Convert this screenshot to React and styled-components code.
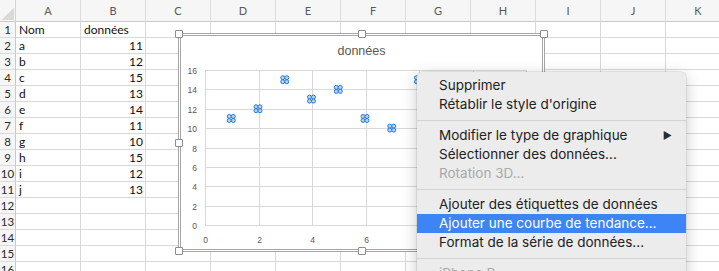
import React from "react";
import styled, { createGlobalStyle, css } from "styled-components";

const GlobalStyle = createGlobalStyle`
  html, body { margin: 0; padding: 0; background: #fff; overflow: hidden; }
  * { box-sizing: border-box; }
`;

const Sheet = styled.div`
  position: relative;
  width: 719px;
  height: 271px;
  overflow: hidden;
  background: #fff;
  font-family: Lato, "Liberation Sans", sans-serif;
`;

const Grid = styled.div`
  display: grid;
  grid-template-columns: 16px repeat(11, 65px);
  grid-template-rows: 22px repeat(16, 16px);
`;

const Corner = styled.div`
  position: relative;
  background: #f6f6f6;
  border-right: 1px solid #d4d4d4;
  border-bottom: 1px solid #c9c9c9;
  &::after {
    content: "";
    position: absolute;
    right: 1px;
    bottom: 1px;
    width: 12px;
    height: 12px;
    background: linear-gradient(135deg, transparent 50%, #dadada 50%);
  }
`;

const ColHeader = styled.div`
  background: #f6f6f6;
  border-right: 1px solid #dcdcdc;
  border-bottom: 1px solid #c9c9c9;
  color: #595959;
  font-size: 11px;
  display: flex;
  align-items: center;
  justify-content: center;
`;

const RowHeader = styled.div`
  background: #f6f6f6;
  border-right: 1px solid #c9c9c9;
  border-bottom: 1px solid #dcdcdc;
  color: #2b2b2b;
  font-size: 11.5px;
  line-height: 15px;
  white-space: nowrap;
  display: flex;
  justify-content: center;
`;

const Cell = styled.div`
  border-right: 1px solid #d9d9d9;
  border-bottom: 1px solid #d9d9d9;
  color: #111;
  font-size: 12px;
  line-height: 15px;
  padding: 0 2px 0 3px;
  white-space: nowrap;
  text-align: ${(p) => (p.$num ? "right" : "left")};
`;

const Chart = styled.div`
  position: absolute;
  left: 178px;
  top: 33px;
  width: 367px;
  height: 219px;
  border: 3px double #a6a6a6;
  background: #fff;
`;

const hPos = { start: "left: -6px;", mid: "left: calc(50% - 4px);", end: "right: -6px;" };
const vPos = { start: "top: -6px;", mid: "top: calc(50% - 4px);", end: "bottom: -6px;" };

const Handle = styled.div`
  position: absolute;
  width: 8px;
  height: 8px;
  background: #fff;
  border: 1px solid #8c8c8c;
  border-radius: 1px;
  ${(p) => hPos[p.$h]}
  ${(p) => vPos[p.$v]}
`;

const Menu = styled.div`
  position: absolute;
  left: 417px;
  top: 72px;
  width: 269px;
  padding: 4px 0;
  background: #ececec;
  border-radius: 5px;
  box-shadow: 0 0 0 0.5px rgba(0, 0, 0, 0.14), 0 4px 16px rgba(0, 0, 0, 0.22);
  font-family: Inter, "Liberation Sans", sans-serif;
  font-size: 13.5px;
  color: #222;
`;

const Item = styled.div`
  height: 19px;
  line-height: 19px;
  padding: 0 14px 0 22px;
  display: flex;
  justify-content: space-between;
  align-items: center;
  white-space: nowrap;
  ${(p) =>
    p.$disabled &&
    css`
      color: #a9a9a9;
    `}
  ${(p) =>
    p.$active &&
    css`
      background: #3d85f6;
      color: #fff;
    `}
`;

const Arrow = styled.span`
  font-size: 10px;
  color: #2b2b2b;
`;

const Separator = styled.div`
  height: 1px;
  margin: 6px 0 5px;
  background: #d3d3d3;
`;

const cols = ["A", "B", "C", "D", "E", "F", "G", "H", "I", "J", "K"];
const data = [
  ["Nom", "données"],
  ["a", 11],
  ["b", 12],
  ["c", 15],
  ["d", 13],
  ["e", 14],
  ["f", 11],
  ["g", 10],
  ["h", 15],
  ["i", 12],
  ["j", 13],
];

const PL = 205;
const PB = 225;
const XU = 26.75;
const YU = 9.6875;

function Marker({ cx, cy }) {
  const o = 2;
  return (
    <g stroke="#2a78d8" strokeWidth="1" fill="#b9d4f4">
      <circle cx={cx - o} cy={cy - o} r="2" />
      <circle cx={cx + o} cy={cy - o} r="2" />
      <circle cx={cx - o} cy={cy + o} r="2" />
      <circle cx={cx + o} cy={cy + o} r="2" />
    </g>
  );
}

function Plot() {
  const values = [11, 12, 15, 13, 14, 11, 10, 15, 12, 13];
  const xs = [0, 2, 4, 6, 8, 10, 12];
  const ys = [0, 2, 4, 6, 8, 10, 12, 14, 16];
  return (
    <svg width="361" height="213" viewBox="181 36 361 213" style={{ display: "block" }}>
      <text x="361.5" y="54.5" textAnchor="middle" fontSize="12.5" fill="#595959" fontFamily="Liberation Sans, sans-serif">
        données
      </text>
      {xs.map((v) => {
        const x = Math.round(PL + v * XU) + 0.5;
        return (
          <g key={"x" + v}>
            <line x1={x} x2={x} y1={70} y2={PB + 0.5} stroke="#d9d9d9" strokeWidth="1" />
            {v <= 8 && (
              <text x={x} y="243" textAnchor="middle" fontSize="8.5" fill="#595959" fontFamily="Liberation Sans, sans-serif">
                {v}
              </text>
            )}
          </g>
        );
      })}
      {ys.map((v) => {
        const y = Math.round(PB - v * YU) + 0.5;
        return (
          <g key={"y" + v}>
            <line x1={PL + 0.5} x2={526.5} y1={y} y2={y} stroke="#d9d9d9" strokeWidth="1" />
            <text x="197" y={y + 3} textAnchor="end" fontSize="8.5" fill="#595959" fontFamily="Liberation Sans, sans-serif">
              {v}
            </text>
          </g>
        );
      })}
      {values.map((v, i) => (
        <Marker key={i} cx={PL + (i + 1) * XU - 0.5} cy={PB - v * YU} />
      ))}
    </svg>
  );
}

const handles = [
  ["start", "start"],
  ["mid", "start"],
  ["end", "start"],
  ["start", "mid"],
  ["end", "mid"],
  ["start", "end"],
  ["mid", "end"],
  ["end", "end"],
];

export default function App() {
  const rows = [];
  for (let r = 1; r <= 16; r++) {
    const d = data[r - 1];
    rows.push(<RowHeader key={"rh" + r}>{r}</RowHeader>);
    cols.forEach((c, ci) => {
      let content = "";
      let num = false;
      if (d && ci < 2) {
        content = d[ci];
        num = typeof content === "number";
      }
      rows.push(
        <Cell key={c + r} $num={num}>
          {content}
        </Cell>
      );
    });
  }

  return (
    <>
      <GlobalStyle />
      <Sheet>
        <Grid>
          <Corner />
          {cols.map((c) => (
            <ColHeader key={c}>{c}</ColHeader>
          ))}
          {rows}
        </Grid>

        <Chart>
          <Plot />
          {handles.map(([h, v]) => (
            <Handle key={h + v} $h={h} $v={v} />
          ))}
        </Chart>

        <Menu>
          <Item>Supprimer</Item>
          <Item>Rétablir le style d'origine</Item>
          <Separator />
          <Item>
            Modifier le type de graphique <Arrow>▶</Arrow>
          </Item>
          <Item>Sélectionner des données...</Item>
          <Item $disabled>Rotation 3D...</Item>
          <Separator />
          <Item>Ajouter des étiquettes de données</Item>
          <Item $active>Ajouter une courbe de tendance...</Item>
          <Item>Format de la série de données...</Item>
          <Separator />
          <Item $disabled>iPhone R...</Item>
        </Menu>
      </Sheet>
    </>
  );
}
